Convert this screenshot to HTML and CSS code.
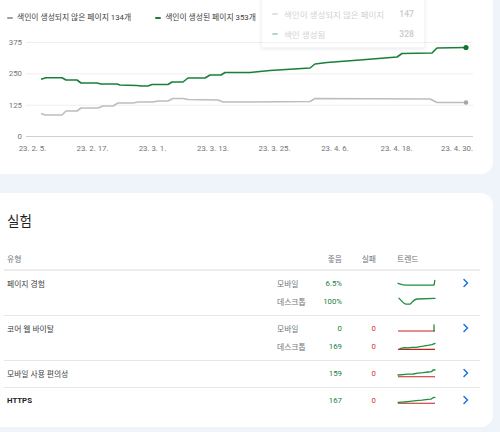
FILE: index.html
```html
<!DOCTYPE html>
<html lang="ko">
<head>
<meta charset="utf-8">
<title>색인 생성 및 실험</title>
<link rel="stylesheet" href="styles.css">
</head>
<body>
<div class="page">
  <section class="card chart-card">
    <div class="legend">
      <span class="leg"><i class="dash dash-gray"></i>색인이 생성되지 않은 페이지 134개</span>
      <span class="leg"><i class="dash dash-green"></i>색인이 생성된 페이지 353개</span>
    </div>
    <div class="chart">
      <svg class="plot" width="493" height="130" viewBox="0 30 493 130">
        <g class="grid">
          <line x1="26" y1="42.5" x2="473" y2="42.5"/>
          <line x1="26" y1="73.8" x2="473" y2="73.8"/>
          <line x1="26" y1="105.2" x2="473" y2="105.2"/>
        </g>
        <line class="base" x1="26" y1="136.5" x2="473" y2="136.5"/>
        <g class="ylab">
          <text x="22" y="45">375</text>
          <text x="22" y="76.3">250</text>
          <text x="22" y="107.8">125</text>
          <text x="22" y="139">0</text>
        </g>
        <g class="xlab">
          <text x="32.5" y="151">23. 2. 5.</text>
          <text x="92.5" y="151">23. 2. 17.</text>
          <text x="152.5" y="151">23. 3. 1.</text>
          <text x="213" y="151">23. 3. 13.</text>
          <text x="274.5" y="151">23. 3. 25.</text>
          <text x="335" y="151">23. 4. 6.</text>
          <text x="396.5" y="151">23. 4. 18.</text>
          <text x="457" y="151">23. 4. 30.</text>
        </g>
        <polyline class="l-gray" points="41,113.5 45,115 62,115 66,111 77,111 81,108 98,108 103,106 113,106 118,103 133,103 138,102 153,102 158,101 168,101 173,98.5 183,98.5 188,99.5 218,100 223,102 250,102 310,101.5 315,98.5 430,99 437,102.5 466,102.5"/>
        <polyline class="l-green" points="41,79.3 46,77.7 62,77.7 66,80 77,80 81,83 97,83 101,84 117,84 120,85 137,85.5 141,86 148,86 152,84.5 168,84.5 172,82 183,82 188,78 205,78 210,75 221,75 225,72.5 250,72.5 270,70.5 310,68 315,64 327,62.5 360,60 397,57 402,53.5 432,53 437,48 466,47.5"/>
        <circle class="d-gray" cx="466" cy="102.5" r="2.3"/>
        <circle class="d-green" cx="466" cy="47.5" r="2.6"/>
      </svg>
    </div>
    <div class="tooltip">
      <div class="tip-row"><i class="dash dash-gray"></i><span class="tip-label">색인이 생성되지 않은 페이지</span><b>147</b></div>
      <div class="tip-row"><i class="dash dash-green"></i><span class="tip-label">색인 생성됨</span><b>328</b></div>
    </div>
  </section>

  <section class="card exp-card">
    <h2 class="title">실험</h2>
    <div class="table">
      <div class="row head">
        <span class="c-name">유형</span>
        <span class="c-good">좋음</span>
        <span class="c-fail">실패</span>
        <span class="c-trend">트렌드</span>
      </div>

      <div class="row">
        <span class="c-name">페이지 경험</span>
        <span class="c-dev">모바일</span>
        <span class="c-good">6.5%</span>
        <svg class="c-trend spark" width="39" height="18" viewBox="-1 0 39 18"><path class="s-green" d="M0,9.3 L4,10.6 L8,11.2 L36,11.2 L36.3,10 L36.8,6.5"/></svg>
        <svg class="c-go chev" width="8" height="18" viewBox="0 0 8 18"><path d="M2,5.5 L5.5,9 L2,12.5"/></svg>
        <span class="c-dev">데스크톱</span>
        <span class="c-good">100%</span>
        <svg class="c-trend spark" width="39" height="18" viewBox="-1 0 39 18"><path class="s-green" d="M1,6.3 C4,9 5,11.6 8,12.2 L12,12.2 C14,11 15,7.6 19,7 L37,6.4"/></svg>
      </div>

      <div class="row">
        <span class="c-name">코어 웹 바이탈</span>
        <span class="c-dev">모바일</span>
        <span class="c-good">0</span>
        <span class="c-fail">0</span>
        <svg class="c-trend spark" width="39" height="18" viewBox="-1 0 39 18"><path class="s-red" d="M0,12 L37,12"/><path class="s-green" d="M36,12 L36,6"/></svg>
        <svg class="c-go chev" width="8" height="18" viewBox="0 0 8 18"><path d="M2,5.5 L5.5,9 L2,12.5"/></svg>
        <span class="c-dev">데스크톱</span>
        <span class="c-good">169</span>
        <span class="c-fail">0</span>
        <svg class="c-trend spark" width="39" height="18" viewBox="-1 0 39 18"><path class="s-red" d="M0,12.4 L37,12.4"/><path class="s-green" d="M2,11.6 L6,10.6 L10,10.8 L14,10.3 L18,10.4 L22,9.6 L25,9.2 L28,8.6 L31,8.2 L34,7.6 L37,6.3"/></svg>
      </div>

      <div class="row">
        <span class="c-name">모바일 사용 편의성</span>
        <span class="c-good">159</span>
        <span class="c-fail">0</span>
        <svg class="c-trend spark" width="39" height="18" viewBox="-1 0 39 18"><path class="s-red" d="M0,12.7 L37,12.7"/><path class="s-green" d="M0,11 L5,10.6 L10,10.2 L15,10 L20,9.2 L25,8.7 L30,8 L33.5,7.7 L35,6 L37,6"/></svg>
        <svg class="c-go chev" width="8" height="18" viewBox="0 0 8 18"><path d="M2,5.5 L5.5,9 L2,12.5"/></svg>
      </div>

      <div class="row">
        <span class="c-name strong">HTTPS</span>
        <span class="c-good">167</span>
        <span class="c-fail">0</span>
        <svg class="c-trend spark" width="39" height="18" viewBox="-1 0 39 18"><path class="s-red" d="M0,12.3 L37,12.3"/><path class="s-green" d="M0,11.3 L6,11 L12,10.4 L18,9.7 L24,9.2 L30,8.4 L33,8.2 L35,6.7 L37,6.3"/></svg>
        <svg class="c-go chev" width="8" height="18" viewBox="0 0 8 18"><path d="M2,5.5 L5.5,9 L2,12.5"/></svg>
      </div>
    </div>
  </section>
</div>
</body>
</html>
```

FILE: styles.css
```css
* { box-sizing: border-box; }

html, body {
  margin: 0;
  padding: 0;
  background: #eff3fa;
  font-family: Roboto, "Noto Sans CJK KR", sans-serif;
  color: #3c4043;
}

.page {
  display: flex;
  flex-direction: column;
  gap: 19px;
  width: 493px;
}

.card {
  background: #ffffff;
  border-radius: 0 0 12px 0;
  position: relative;
}

.exp-card {
  border-radius: 0 12px 12px 0;
}

/* ---------- chart card ---------- */
.chart-card {
  padding: 12px 0 14px;
  height: 174px;
}

.legend {
  display: flex;
  gap: 24px;
  padding-left: 7px;
  font-size: 7.8px;
  line-height: 12px;
  color: #3c4043;
}

.leg {
  display: flex;
  align-items: center;
  gap: 4px;
  white-space: nowrap;
}

.dash {
  display: inline-block;
  width: 6px;
  height: 2px;
  border-radius: 1px;
}
.dash-gray { background: #9aa0a6; }
.dash-green { background: #188038; }

.chart {
  margin-top: 6px;
  height: 130px;
}

.plot { display: block; }

.grid line { stroke: #efefef; stroke-width: 1; }
.base { stroke: #cfcfcf; stroke-width: 1; }

.ylab text, .xlab text {
  font-family: Roboto, sans-serif;
  font-size: 7.8px;
  fill: #757575;
}
.ylab text { text-anchor: end; }
.xlab text { text-anchor: middle; }

.l-gray { fill: none; stroke: #bdbdbd; stroke-width: 1.6; stroke-linejoin: round; }
.l-green { fill: none; stroke: #188038; stroke-width: 1.6; stroke-linejoin: round; }
.d-gray { fill: #a8a8a8; }
.d-green { fill: #137333; }

/* faded tooltip overlay */
.tooltip {
  position: absolute;
  left: 261px;
  top: -4px;
  width: 164px;
  height: 52px;
  padding: 7px 10px 5px;
  background: #ffffff;
  border: 1px solid #e3e3e3;
  box-shadow: 0 1px 3px rgba(0, 0, 0, 0.25);
  opacity: 0.3;
  font-size: 8.5px;
  color: #5f6368;
}

.tip-row {
  display: flex;
  align-items: center;
  height: 20px;
  gap: 6px;
  white-space: nowrap;
}
.tip-label { flex: 1; }
.tip-row b { font-weight: 700; }

/* ---------- experience card ---------- */
.exp-card {
  padding: 18px 0 13px;
}

.title {
  margin: 0;
  padding-left: 7px;
  font-size: 13.5px;
  line-height: 20px;
  font-weight: 400;
  color: #1f1f1f;
}

.table {
  width: 476px;
  margin-left: 4px;
  font-size: 7.8px;
}

.row {
  display: grid;
  grid-template-columns: 273px 45px 20px 34px 21px 39px 44px;
  grid-auto-rows: 18px;
  align-items: center;
  padding: 3px 0 5px;
}

.row + .row { border-top: 1px solid #e6e6e6; }

.row.head {
  grid-auto-rows: 12px;
  padding: 21px 0 5px;
  border-bottom: 2px solid #ececec;
  color: #6f7378;
}
.row.head + .row { border-top: 0; }

.c-name { grid-column: 1; padding-left: 3px; color: #3c4043; white-space: nowrap; }
.head .c-name { color: #6f7378; }
.c-name.strong { font-weight: 700; color: #202124; }
.c-dev { grid-column: 2; color: #6f7378; white-space: nowrap; }
.c-good { grid-column: 3; justify-self: end; color: #188038; white-space: nowrap; }
.c-fail { grid-column: 4; justify-self: end; color: #d93025; }
.head .c-good, .head .c-fail { color: #6f7378; }
.c-trend { grid-column: 6; white-space: nowrap; }
.c-go { grid-column: 7; margin-left: 26px; }

.spark { display: block; }
.s-green { fill: none; stroke: #1e8e3e; stroke-width: 1.3; stroke-linejoin: round; stroke-linecap: round; }
.s-red { fill: none; stroke: #c5221f; stroke-width: 1.1; }

.chev { display: block; }
.chev path { fill: none; stroke: #1a73e8; stroke-width: 1.5; stroke-linecap: round; stroke-linejoin: round; }
```
